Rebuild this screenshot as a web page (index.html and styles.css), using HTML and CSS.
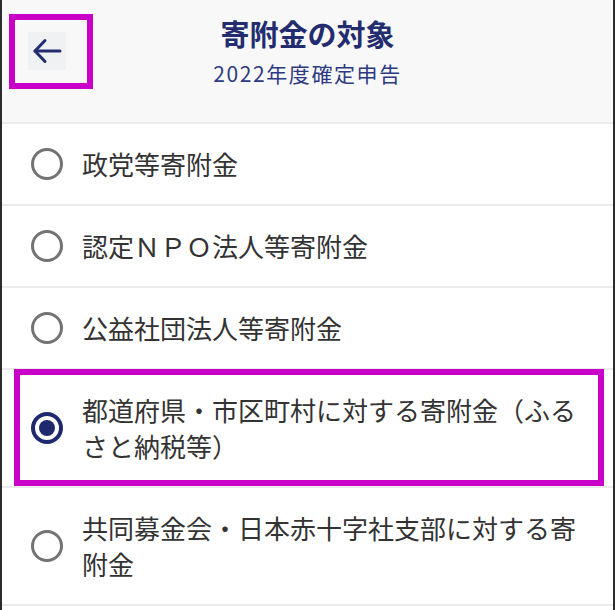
FILE: index.html
```html
<!DOCTYPE html>
<html lang="ja">
<head>
<meta charset="utf-8">
<title>寄附金の対象</title>
<link rel="stylesheet" href="styles.css">
</head>
<body>
<div class="frame">
  <header class="header">
    <button class="back" aria-label="戻る">
      <svg width="30" height="26" viewBox="0 0 30 26" fill="none" stroke="#232c6e" stroke-width="3" stroke-linecap="round" stroke-linejoin="round">
        <path d="M28 13H3"/>
        <path d="M13 2.5L3 13l10 10.5"/>
      </svg>
    </button>
    <div class="titles">
      <div class="title">寄附金の対象</div>
      <div class="subtitle">2022年度確定申告</div>
    </div>
    <div></div>
    <div class="mark mark-back"></div>
  </header>
  <ul class="list">
    <li class="row"><span class="radio"></span><span class="label">政党等寄附金</span></li>
    <li class="row"><span class="radio"></span><span class="label">認定ＮＰＯ法人等寄附金</span></li>
    <li class="row"><span class="radio"></span><span class="label">公益社団法人等寄附金</span></li>
    <li class="row row-tall selected"><span class="radio on"></span><span class="label">都道府県・市区町村に対する寄附金（ふるさと納税等）</span><div class="mark mark-row"></div></li>
    <li class="row row-tall"><span class="radio"></span><span class="label">共同募金会・日本赤十字社支部に対する寄附金</span></li>
  </ul>
</div>
</body>
</html>
```

FILE: styles.css
```css
* { box-sizing: border-box; }
html, body { margin: 0; padding: 0; background: #ffffff; }
body {
  font-family: "Noto Sans CJK JP", "Noto Sans", sans-serif;
  width: 616px;
  height: 610px;
  overflow: hidden;
}
.frame {
  width: 615px;
  height: 610px;
  border-left: 2px solid #2b2b2b;
  border-right: 2px solid #2b2b2b;
  background: #ffffff;
}
.header {
  position: relative;
  height: 124px;
  background: #f8f8f8;
  border-bottom: 2px solid #ebebeb;
  display: grid;
  grid-template-columns: 1fr auto 1fr;
  padding-top: 13px;
}
.back {
  justify-self: start;
  margin: 19px 0 0 26px;
  width: 38px;
  height: 38px;
  border: 0;
  padding: 0;
  background: #f0f1f3;
  display: flex;
  align-items: center;
  justify-content: center;
}
.titles {
  text-align: center;
  color: #232c6e;
}
.title {
  font-size: 29px;
  font-weight: 700;
  line-height: 40px;
}
.subtitle {
  margin-top: 4px;
  font-size: 21px;
  line-height: 32px;
  letter-spacing: 1.6px;
  color: #2d3a82;
}
.mark {
  position: absolute;
  border: 6px solid #c800c8;
  pointer-events: none;
}
.mark-back {
  left: 7px;
  top: 14px;
  width: 84px;
  height: 75px;
}
.list {
  list-style: none;
  margin: 0;
  padding: 0;
}
.row {
  position: relative;
  display: flex;
  align-items: center;
  gap: 19px;
  min-height: 82px;
  padding: 0 26px 0 29px;
  border-bottom: 2px solid #ebebeb;
  color: #333333;
  font-size: 26px;
  line-height: 36px;
}
.row-tall {
  padding-top: 22px;
  padding-bottom: 22px;
}
.radio {
  flex: 0 0 auto;
  width: 32px;
  height: 32px;
  border-radius: 50%;
  border: 3px solid #737373;
}
.radio.on {
  border: 4px solid #1f2a6e;
  position: relative;
}
.radio.on::after {
  content: "";
  position: absolute;
  left: 4px;
  top: 4px;
  width: 16px;
  height: 16px;
  border-radius: 50%;
  background: #1f2a6e;
}
.label { flex: 1 1 auto; }
.mark-row {
  left: 12px;
  top: -1px;
  width: 590px;
  height: 117px;
}
```
